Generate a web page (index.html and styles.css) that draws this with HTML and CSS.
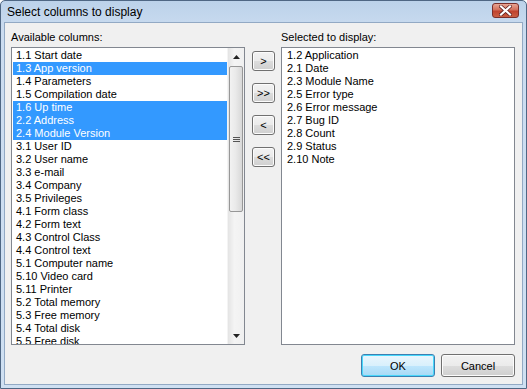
FILE: index.html
```html
<!DOCTYPE html>
<html lang="en">
<head>
  <meta charset="UTF-8"/>
  <title>Select columns to display</title>
  <link rel="stylesheet" href="styles.css">
</head>
<body>
  <div class="window">
    <div class="titlebar">
      <span class="title">Select columns to display</span>
      <span class="close">
        <svg width="13" height="11" viewBox="0 0 13 11"><path d="M2 1.5 L11 9.5 M11 1.5 L2 9.5" stroke="#5a1a1a" stroke-width="3.6" stroke-linecap="square"/><path d="M2 1.5 L11 9.5 M11 1.5 L2 9.5" stroke="#fff" stroke-width="2.2" stroke-linecap="square"/></svg>
      </span>
    </div>
    <div class="panel">
      <div class="columns">
        <div class="col">
          <div class="label">Available columns:</div>
          <div class="listbox">
            <ul class="items">
              <li>1.1 Start date</li>
              <li class="sel">1.3 App version</li>
              <li>1.4 Parameters</li>
              <li>1.5 Compilation date</li>
              <li class="sel">1.6 Up time</li>
              <li class="sel">2.2 Address</li>
              <li class="sel">2.4 Module Version</li>
              <li>3.1 User ID</li>
              <li>3.2 User name</li>
              <li>3.3 e-mail</li>
              <li>3.4 Company</li>
              <li>3.5 Privileges</li>
              <li>4.1 Form class</li>
              <li>4.2 Form text</li>
              <li>4.3 Control Class</li>
              <li>4.4 Control text</li>
              <li>5.1 Computer name</li>
              <li>5.10 Video card</li>
              <li>5.11 Printer</li>
              <li>5.2 Total memory</li>
              <li>5.3 Free memory</li>
              <li>5.4 Total disk</li>
              <li>5.5 Free disk</li>
            </ul>
            <div class="scrollbar">
              <div class="arrow"><svg width="7" height="4" viewBox="0 0 7 4"><path d="M0 4 L3.5 0 L7 4 Z" fill="#222"/></svg></div>
              <div class="track">
                <div class="thumb">
                  <svg width="7" height="7" viewBox="0 0 7 7"><path d="M0 1.5 H7 M0 3.5 H7 M0 5.5 H7" stroke="#555" stroke-width="1"/></svg>
                </div>
              </div>
              <div class="arrow"><svg width="7" height="4" viewBox="0 0 7 4"><path d="M0 0 L7 0 L3.5 4 Z" fill="#222"/></svg></div>
            </div>
          </div>
        </div>
        <div class="movers">
          <button class="btn small">&gt;</button>
          <button class="btn small">&gt;&gt;</button>
          <button class="btn small">&lt;</button>
          <button class="btn small">&lt;&lt;</button>
        </div>
        <div class="col">
          <div class="label">Selected to display:</div>
          <div class="listbox">
            <ul class="items plain">
              <li>1.2 Application</li>
              <li>2.1 Date</li>
              <li>2.3 Module Name</li>
              <li>2.5 Error type</li>
              <li>2.6 Error message</li>
              <li>2.7 Bug ID</li>
              <li>2.8 Count</li>
              <li>2.9 Status</li>
              <li>2.10 Note</li>
            </ul>
          </div>
        </div>
      </div>
      <div class="actions">
        <button class="btn wide default">OK</button>
        <button class="btn wide">Cancel</button>
      </div>
    </div>
  </div>
</body>
</html>
```

FILE: styles.css
```css
*{margin:0;padding:0;box-sizing:border-box;}
html,body{background:#fff;}
body{font-family:"Liberation Sans",Arial,sans-serif;font-size:11px;color:#000;}
.window{width:527px;height:389px;border:1px solid #4f6784;border-radius:5px 5px 0 0;background:linear-gradient(#bcd2ea,#cbdcf0 30px,#cfe0f2);padding:0 3px 3px;display:flex;flex-direction:column;overflow:hidden;}
.titlebar{height:21px;display:flex;align-items:center;justify-content:space-between;padding:0 4px 0 3px;}
.title{font-size:12px;color:#000;}
.close{width:27px;height:15px;border:1px solid #7a2e2a;border-radius:3px;background:linear-gradient(#e8a593,#d2705c 45%,#c0422e 55%,#c95f43);display:flex;align-items:center;justify-content:center;margin-top:-2px;}
.panel{flex:1;background:#f0f0f0;border:1px solid #92a9c4;padding:8px 7px 7px 6px;display:flex;flex-direction:column;}
.columns{display:flex;flex:1;}
.col{width:234px;display:flex;flex-direction:column;}
.label{height:13px;line-height:13px;margin-bottom:3px;}
.listbox{height:298px;border:1px solid #828790;background:#fff;display:flex;overflow:hidden;}
.items{list-style:none;flex:1;padding:1px 0 0 1px;overflow:hidden;}
.items li{height:13px;line-height:13px;padding-left:3px;white-space:nowrap;}
.items.plain li{padding-left:4px;}
.items li.sel{background:#3399ff;color:#fff;}
.scrollbar{width:17px;display:flex;flex-direction:column;background:linear-gradient(90deg,#e4e4e4,#f4f4f4 40%,#f0f0f0);border-left:1px solid #f4f4f4;}
.arrow{height:17px;display:flex;align-items:center;justify-content:center;}
.track{flex:1;padding:1px 1px;}
.thumb{height:146px;border:1px solid #979797;border-radius:2px;background:linear-gradient(90deg,#f2f2f2,#eaeaea 45%,#d8d8d8);display:flex;align-items:center;justify-content:center;}
.movers{width:36px;display:flex;flex-direction:column;align-items:center;gap:12px;padding-top:20px;padding-left:1px;}
.btn{font-family:"Liberation Sans",Arial,sans-serif;font-size:11px;color:#000;border:1px solid #707070;border-radius:3px;background:linear-gradient(#f2f2f2,#ebebeb 50%,#dddddd 50%,#cfcfcf);box-shadow:inset 0 0 0 1px #fcfcfc;}
.btn.small{width:23px;height:20px;line-height:16px;}
.actions{display:flex;justify-content:flex-end;gap:6px;margin-top:9px;}
.btn.wide{width:74px;height:23px;}
.btn.default{border-color:#3c7fb1;background:linear-gradient(#eaf6fd,#d9f0fc 50%,#bee6fd 50%,#a7d9f5);box-shadow:inset 0 0 0 1px #48d7fb;}
```
